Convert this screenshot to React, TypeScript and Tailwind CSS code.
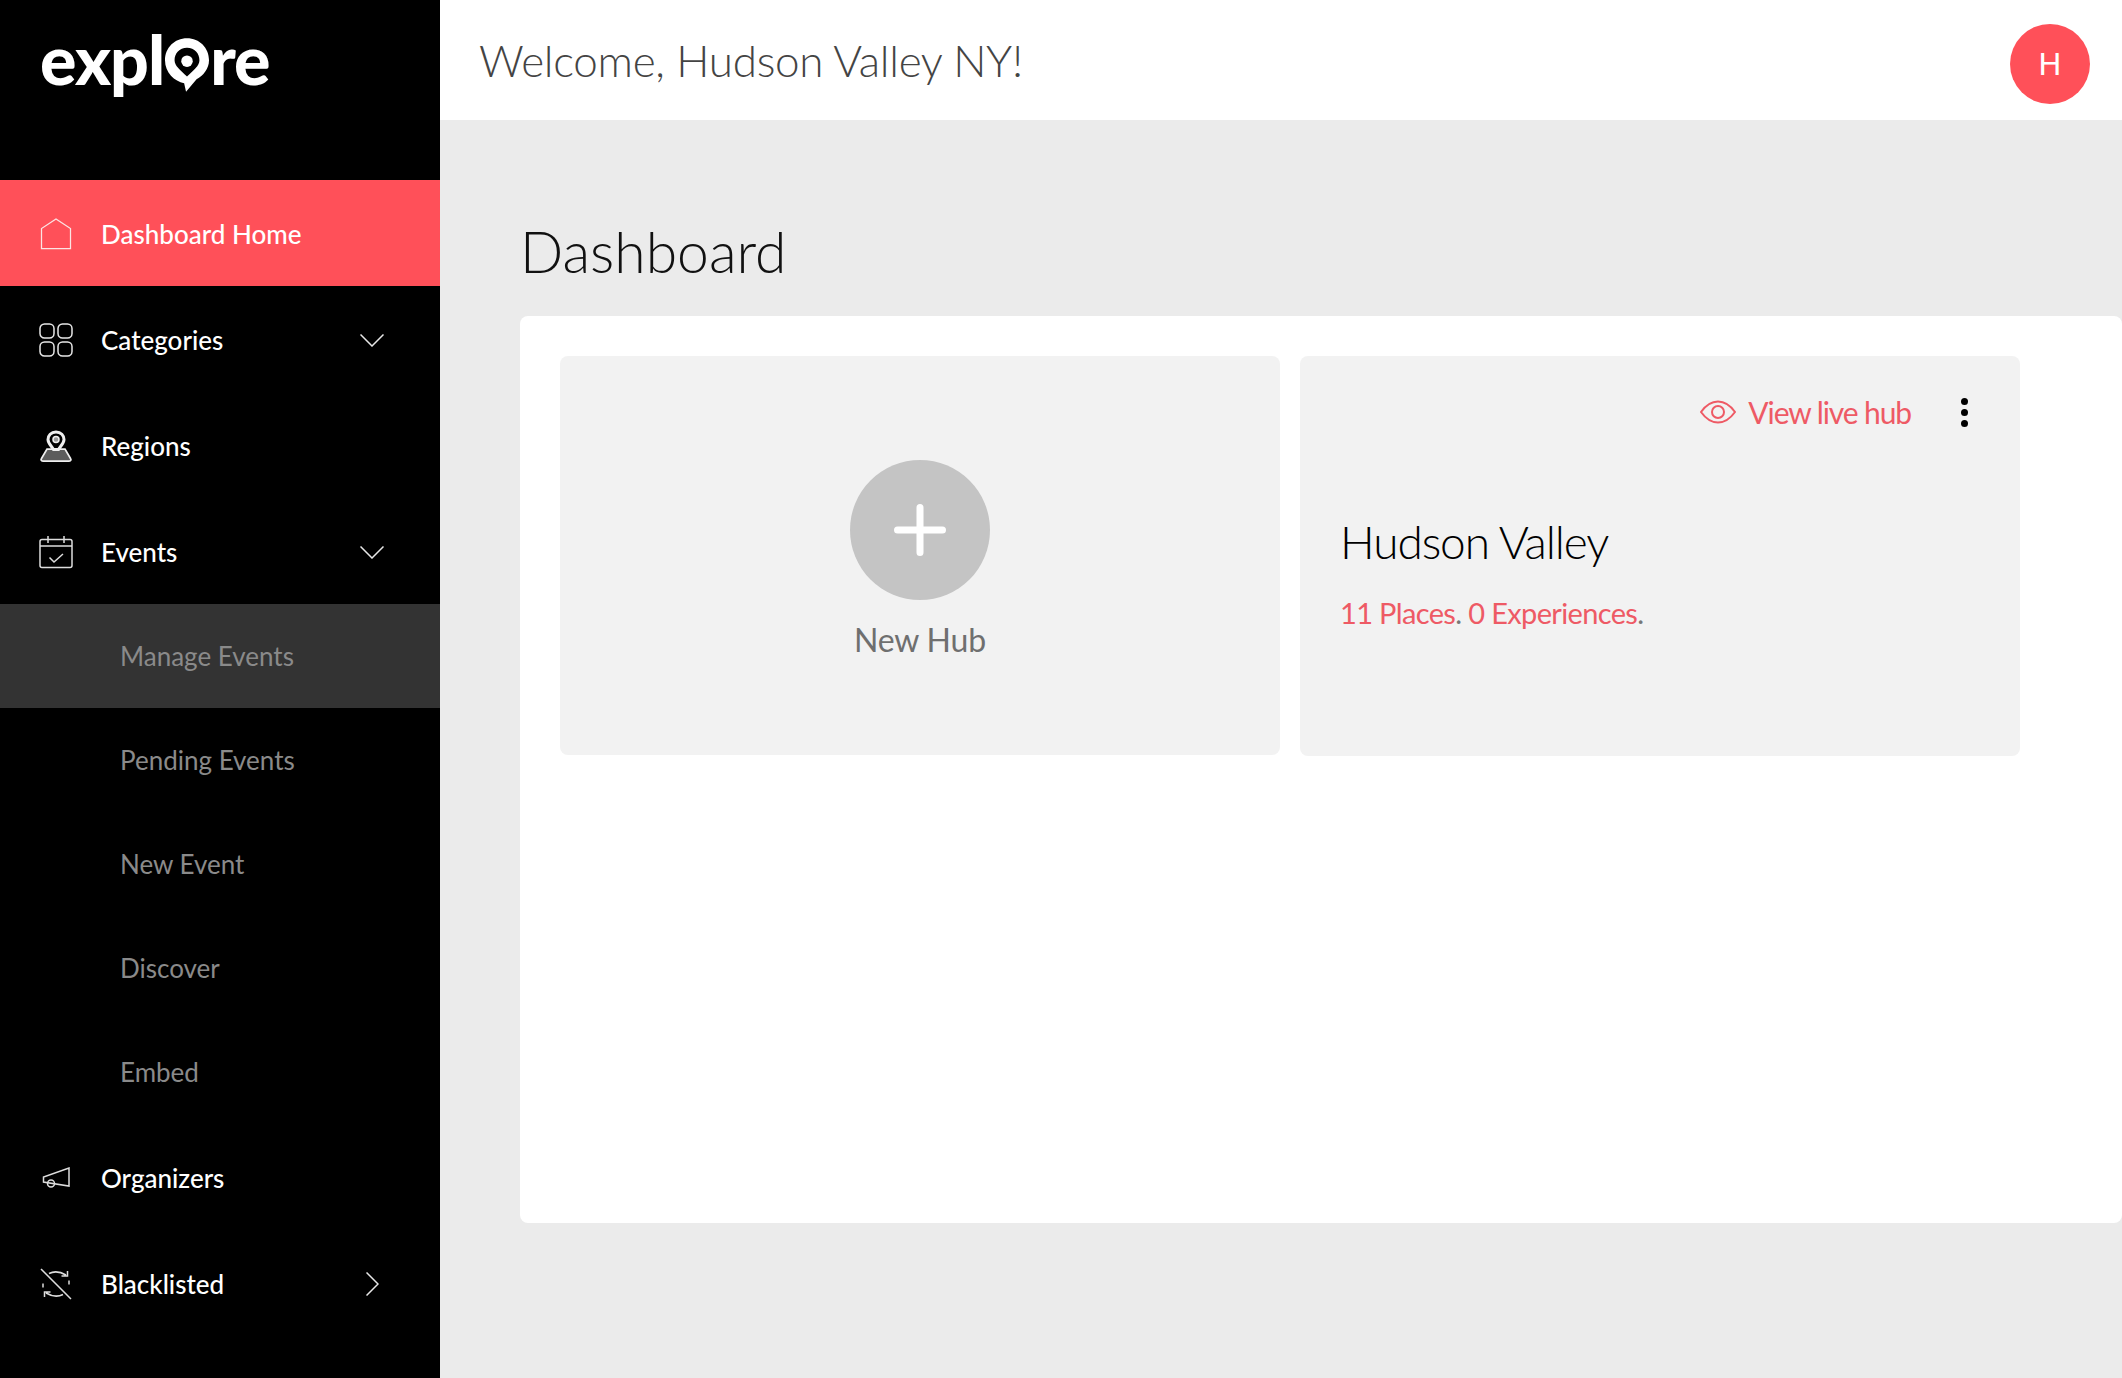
import React from "react";

const font = { fontFamily: "Lato, 'Liberation Sans', sans-serif" };

const HomeIcon = () => (
  <svg width="32" height="32" viewBox="0 0 32 32" fill="none" stroke="#fbe4e4" strokeWidth="1.25">
    <path d="M1.5 30.5V10.500L16 1L30.5 10.500V30.5Z" />
  </svg>
);

const GridIcon = () => (
  <svg width="34" height="34" viewBox="0 0 34 34" fill="none" stroke="#e8e8e8" strokeWidth="1.5">
    <rect x="1" y="1" width="14" height="14" rx="4.5" />
    <rect x="19" y="1" width="14" height="14" rx="4.5" />
    <rect x="1" y="19" width="14" height="14" rx="4.5" />
    <rect x="19" y="19" width="14" height="14" rx="4.5" />
  </svg>
);

const RegionIcon = () => (
  <svg width="32" height="32" viewBox="0 0 32 32">
    <path d="M7 19h18l5.500 9.500a1.500 1.500 0 0 1-1 2.500H2.500a1.500 1.500 0 0 1-1-2.500Z" fill="#5c5c5c" stroke="#eee" strokeWidth="1.75" />
    <path d="M16 2c-5 0-8 3.600-8 7.500 0 4 3.500 6.500 5.500 10h5c2-3.500 5.500-6 5.500-10C24 5.600 21 2 16 2Z" fill="#000" stroke="#eee" strokeWidth="3" />
    <circle cx="16" cy="9.500" r="3" fill="#999" stroke="#eee" strokeWidth="1.500" />
  </svg>
);

const CalendarIcon = () => (
  <svg width="34" height="34" viewBox="0 0 34 34" fill="none" stroke="#ddd" strokeWidth="1.5">
    <rect x="1" y="4.500" width="32" height="28" rx="2" />
    <path d="M1 11h32M9 1v7M25 1v7" />
    <path d="M10.500 22.500l4.500 4.500 9-8" />
  </svg>
);

const MegaphoneIcon = () => (
  <svg width="28" height="22" viewBox="0 0 28 22" fill="none" stroke="#ddd" strokeWidth="1.5">
    <path d="M27 1v18L1.500 15v-5Z" />
    <circle cx="9" cy="16.500" r="3.500" />
  </svg>
);

const BlacklistIcon = () => (
  <svg width="32" height="32" viewBox="0 0 32 32" fill="none" stroke="#ddd" strokeWidth="1.5">
    <path d="M1 1l30 30" />
    <path d="M9 5.500c5-2.500 11-2 17 1.500M27.500 3v5h-6M23 26.500c-5 2.500-11 2-17-1.500M4.500 29v-5h6M3 19.500v-4M29 16.500v-4" />
  </svg>
);

const ChevronDown = () => (
  <svg width="24" height="13" viewBox="0 0 24 13" fill="none" stroke="#e8e8e8" strokeWidth="1.5">
    <path d="M.5.500 12 12 23.500.500" />
  </svg>
);

const ChevronRight = () => (
  <svg width="13" height="24" viewBox="0 0 13 24" fill="none" stroke="#e8e8e8" strokeWidth="1.5">
    <path d="M.5.500 12 12 .5 23.500" />
  </svg>
);

const NavItem = ({
  icon,
  label,
  active,
  chevron,
}: {
  icon: React.ReactNode;
  label: string;
  active?: boolean;
  chevron?: React.ReactNode;
}) => (
  <div className={`flex h-[106px] items-center pt-[2px] text-[26px] font-medium text-white ${active ? "bg-[#ff5059]" : ""}`}>
    <div className="flex w-[112px] justify-center pr-[1px]">{icon}</div>
    <span className="-ml-[11px]">{label}</span>
    {chevron && <div className="ml-auto mr-[50px] flex w-[36px] justify-center">{chevron}</div>}
  </div>
);

const SubItem = ({ label, active }: { label: string; active?: boolean }) => (
  <div className={`flex h-[104px] items-center pl-[120px] text-[26px] text-[#8a8a8a] ${active ? "bg-[#333333]" : ""}`}>
    {label}
  </div>
);

export default function App() {
  return (
    <div className="flex h-[1378px] w-[2122px] overflow-hidden bg-[#ebebeb]" style={font}>
      <aside className="w-[440px] shrink-0 overflow-hidden bg-black">
        <div className="flex h-[180px] items-start pl-[40px] pt-[15px]">
          <div className="flex items-center text-[68px] font-black leading-[88px] tracking-[-1px] text-white">
            <span>expl</span>
            <svg width="44" height="54" viewBox="0 0 46 56" className="mx-[1px] mt-[12px]">
              <path
                fillRule="evenodd"
                fill="#fff"
                d="M23 0C10 0 0 10 0 23c0 13 10 22 20 24l2 9 11-13c7-4 13-11 13-20C46 10 36 0 23 0ZM23 10C15 10 10 16 10 23c0 6 6 10 13 17 7-7 13-11 13-17 0-7-5-13-13-13Z"
              />
              <circle cx="23" cy="24" r="6" fill="#fff" />
            </svg>
            <span>re</span>
          </div>
        </div>
        <NavItem icon={<HomeIcon />} label="Dashboard Home" active />
        <NavItem icon={<GridIcon />} label="Categories" chevron={<ChevronDown />} />
        <NavItem icon={<RegionIcon />} label="Regions" />
        <NavItem icon={<CalendarIcon />} label="Events" chevron={<ChevronDown />} />
        <SubItem label="Manage Events" active />
        <SubItem label="Pending Events" />
        <SubItem label="New Event" />
        <SubItem label="Discover" />
        <SubItem label="Embed" />
        <NavItem icon={<MegaphoneIcon />} label="Organizers" />
        <NavItem icon={<BlacklistIcon />} label="Blacklisted" chevron={<ChevronRight />} />
        <div className="flex h-[106px] w-[112px] justify-center pt-[42px]">
          <div className="h-[30px] w-[24px] rounded-full border-2 border-[#ddd]" />
        </div>
      </aside>
      <main className="flex min-w-0 flex-1 flex-col">
        <header className="flex h-[120px] shrink-0 items-center justify-between bg-white pl-[39px] pr-[32px]">
          <h1 className="text-[44px] font-light tracking-[-0.3px] text-[#444444]">Welcome, Hudson Valley NY!</h1>
          <div className="mt-[8px] flex h-[80px] w-[80px] items-center justify-center rounded-full bg-[#ff5059] text-[32px] text-white" style={{ fontFamily: "Roboto, sans-serif" }}>
            H
          </div>
        </header>
        <div className="flex flex-1 flex-col pl-[80px]">
          <h2 className="mt-[44px] h-[152px] pt-[33px] text-[57px] font-light leading-[108px] text-[#111111]">Dashboard</h2>
          <section className="flex h-[907px] gap-[20px] rounded-lg bg-white p-[40px]">
            <div className="flex h-[399px] w-[720px] flex-col items-center rounded-lg bg-[#f2f2f2] pt-[104px]">
              <div className="flex h-[140px] w-[140px] items-center justify-center rounded-full bg-[#c4c4c4]">
                <svg width="52" height="52" viewBox="0 0 52 52" stroke="#fff" strokeWidth="7" strokeLinecap="round">
                  <path d="M26 3.500v45M3.500 26h45" />
                </svg>
              </div>
              <span className="mt-[16px] text-[32px] tracking-[-0.2px] text-[#6f6f6f]">New Hub</span>
            </div>
            <div className="relative h-[400px] w-[720px] rounded-lg bg-[#f2f2f2] px-[40px]">
              <div className="flex h-[112px] items-center justify-end">
                <svg width="36" height="24" viewBox="0 0 36 24" fill="none" stroke="#ee5a65" strokeWidth="2">
                  <path d="M1 12C6 5 11 1.500 18 1.500S30 5 35 12c-5 7-10 10.500-17 10.500S6 19 1 12Z" />
                  <circle cx="18" cy="12" r="6" />
                </svg>
                <span className="ml-[12px] text-[30px] tracking-[-1.1px] text-[#ee5a65]">View live hub</span>
                <div className="ml-[50px] mr-[12px] flex flex-col gap-[4px]">
                  <span className="h-[7px] w-[7px] rounded-full bg-black" />
                  <span className="h-[7px] w-[7px] rounded-full bg-black" />
                  <span className="h-[7px] w-[7px] rounded-full bg-black" />
                </div>
              </div>
              <h3 className="mt-[44px] text-[46px] font-light leading-[60px] tracking-[-1.1px] text-black">Hudson Valley</h3>
              <p className="mt-[21px] text-[29px] leading-[40px] tracking-[-0.65px] text-[#ee5a65]">
                11 Places<span className="text-[#777]">.</span> 0 Experiences<span className="text-[#777]">.</span>
              </p>
            </div>
          </section>
        </div>
      </main>
    </div>
  );
}
